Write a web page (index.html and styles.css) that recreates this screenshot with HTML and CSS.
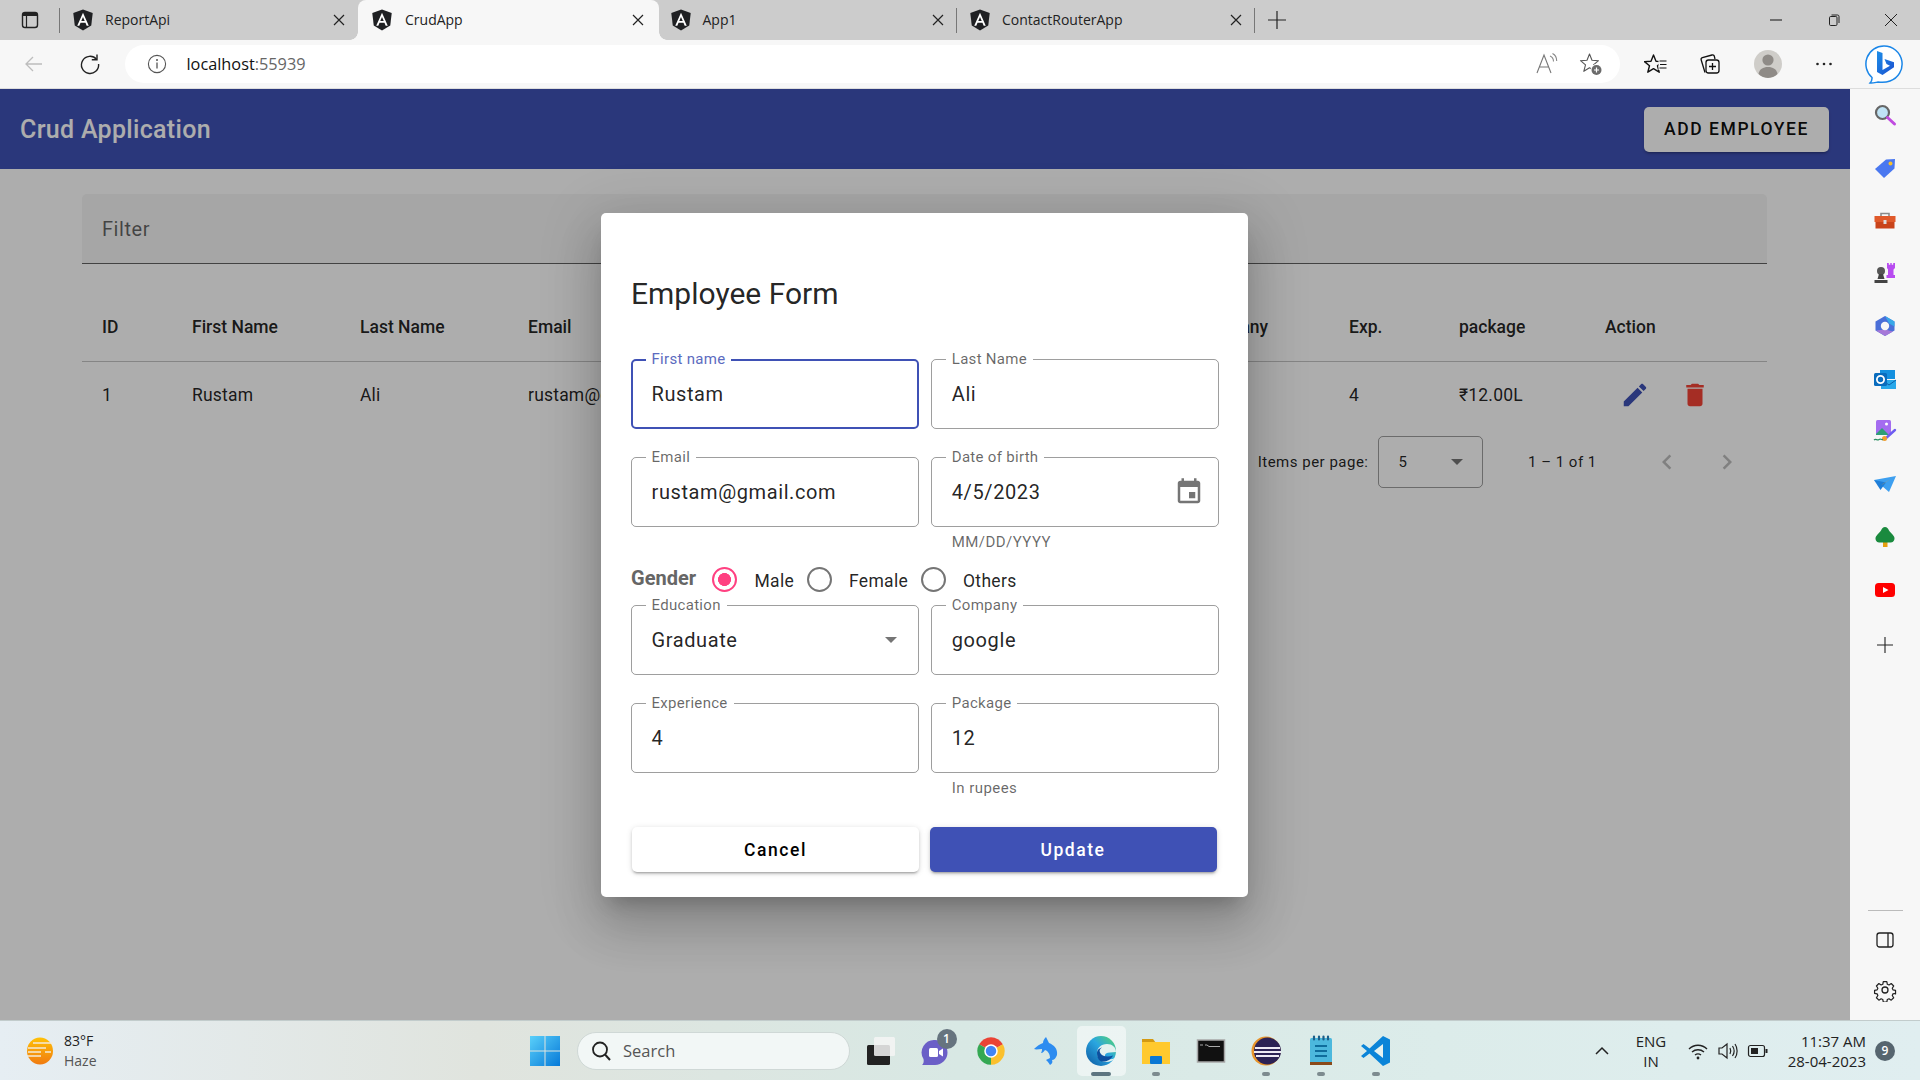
FILE: index.html
```html
<!DOCTYPE html>
<html lang="en">
<head>
<meta charset="utf-8">
<title>CrudApp</title>
<link rel="stylesheet" href="styles.css">
</head>
<body>
<svg class="defs" aria-hidden="true">
  <defs>
    <symbol id="ng" viewBox="0 0 24 24">
      <path fill="#1f2023" d="M12 .5 22.6 4.3 21 18 12 23.5 3 18 1.4 4.3z"/>
      <path fill="#fff" fill-rule="evenodd" d="M12 4 5.7 18.3H8l1.3-3.2h5.4l1.3 3.2h2.3zM10.1 13.2 12 8.6l1.9 4.6z"/>
    </symbol>
    <symbol id="x" viewBox="0 0 12 12"><path d="M1 1l10 10M11 1 1 11" fill="none" stroke="#222" stroke-width="1.2"/></symbol>
    <linearGradient id="edgeG" x1="0" y1="1" x2="1" y2="0"><stop offset="0" stop-color="#0b57a0"/><stop offset=".55" stop-color="#2aa6e0"/><stop offset="1" stop-color="#58d86a"/></linearGradient>
    <linearGradient id="bingG" x1="0" y1="0" x2="1" y2="1"><stop offset="0" stop-color="#1e8fe8"/><stop offset="1" stop-color="#1b4fd0"/></linearGradient>
    <linearGradient id="sunG" x1="0" y1="0" x2="0" y2="1"><stop offset="0" stop-color="#ffc107"/><stop offset="1" stop-color="#f07a10"/></linearGradient>
    <linearGradient id="winG" x1="0" y1="0" x2="1" y2="1"><stop offset="0" stop-color="#5ad0fa"/><stop offset="1" stop-color="#0679d8"/></linearGradient>
  </defs>
</svg>

<div class="tabstrip">
  <div class="tab-toggle">
    <svg class="i20" viewBox="0 0 20 20"><rect x="2.5" y="2.5" width="15" height="15" rx="2.5" fill="none" stroke="#222" stroke-width="1.4"/><path d="M3 3h14v3H3z" fill="#222"/><path d="M6.5 6v11" stroke="#222" stroke-width="1.2"/></svg>
  </div>
  <div class="tab">
    <svg class="tab-ico"><use href="#ng"/></svg><span class="tab-text">ReportApi</span><svg class="tab-x"><use href="#x"/></svg>
  </div>
  <div class="tab tab-active">
    <svg class="tab-ico"><use href="#ng"/></svg><span class="tab-text">CrudApp</span><svg class="tab-x"><use href="#x"/></svg>
  </div>
  <div class="tab sep tab-third">
    <svg class="tab-ico"><use href="#ng"/></svg><span class="tab-text">App1</span><svg class="tab-x"><use href="#x"/></svg>
  </div>
  <div class="tab sep">
    <svg class="tab-ico"><use href="#ng"/></svg><span class="tab-text">ContactRouterApp</span><svg class="tab-x"><use href="#x"/></svg>
  </div>
  <svg class="new-tab" viewBox="0 0 18 18"><path d="M9 0v18M0 9h18" stroke="#222" stroke-width="1.2"/></svg>
  <div class="win-controls">
    <div class="win-btn"><svg class="i12" viewBox="0 0 12 12"><path d="M0 6h12" stroke="#222" stroke-width="1.1"/></svg></div>
    <div class="win-btn"><svg class="i12" viewBox="0 0 12 12"><rect x="1.5" y="2.5" width="7.5" height="9" rx="1.2" fill="none" stroke="#222"/><path d="M3.5 1h6a1.5 1.5 0 0 1 1.5 1.5V9" fill="none" stroke="#222"/></svg></div>
    <div class="win-btn"><svg class="i12" viewBox="0 0 12 12"><path d="M0 0l12 12M12 0 0 12" stroke="#222" stroke-width="1"/></svg></div>
  </div>
</div>

<div class="toolbar">
  <div class="tool"><svg class="i20" viewBox="0 0 20 20"><path d="M18 10H2M9 3l-7 7 7 7" fill="none" stroke="#bdbdbd" stroke-width="1.3"/></svg></div>
  <div class="tool"><svg class="i22" viewBox="0 0 22 22"><path d="M17.5 6.2A8.6 8.6 0 1 0 19.6 11" fill="none" stroke="#222" stroke-width="1.4"/><path d="M18 1.5v5.2h-5.2" fill="none" stroke="#222" stroke-width="1.4"/></svg></div>
  <div class="address">
    <svg class="i20" viewBox="0 0 20 20"><circle cx="10" cy="10" r="8.6" fill="none" stroke="#555" stroke-width="1.1"/><path d="M10 8.6v6" stroke="#555" stroke-width="1.3"/><circle cx="10" cy="6" r="1" fill="#555"/></svg>
    <span class="url">localhost<span class="url-port">:55939</span></span>
    <div class="address-icons">
      <svg class="i24" viewBox="0 0 24 24"><path d="M2 21 9 3l7 18M4.6 15h8.800" fill="none" stroke="#777" stroke-width="1.1"/><path d="M15 4c2.500 1 3.500 3 3.500 5.500M17.500 1.500c3 1.500 4.200 4 4.200 7.500" fill="none" stroke="#888" stroke-width="1.1"/></svg>
      <svg class="i24" viewBox="0 0 24 24"><path d="M10.500 2 13 8.300l6.500.4-5 4.200 1.700 6.400-5.700-3.500-5.700 3.500 1.700-6.400-5-4.200 6.500-.4z" fill="none" stroke="#555" stroke-width="1.1" stroke-linejoin="round"/><circle cx="17.500" cy="18" r="6" fill="#fff"/><circle cx="17.500" cy="18" r="5" fill="#6b6b6b"/><path d="M17.500 15.500v5M15 18h5" stroke="#fff" stroke-width="1.2"/></svg>
    </div>
  </div>
  <div class="tool"><svg class="i24" viewBox="0 0 24 24"><path d="M9.500 3l2.500 6.200 6.500.4-5 4.200 1.700 6.400-5.700-3.500-5.700 3.500 1.700-6.400-5-4.200 6.500-.4z" fill="none" stroke="#111" stroke-width="1.400" stroke-linejoin="round"/><path d="M14.500 8h8.500v10h-8.500z" fill="#f7f7f7"/><path d="M15.500 9h7M16 12.500h6.500M15.500 16h7" stroke="#111" stroke-width="1.200"/></svg></div>
  <div class="tool tool-coll"><svg class="i24" viewBox="0 0 24 24"><path d="M7 20.500 3.200 8c-.3-1 .2-2 1.200-2.300L14 3c1-.3 2 .2 2.300 1.200L17 7" fill="none" stroke="#111" stroke-width="1.300"/><rect x="8" y="8" width="13" height="13" rx="2.500" fill="#f7f7f7" stroke="#111" stroke-width="1.300"/><path d="M14.500 11v7M11 14.500h7" stroke="#111" stroke-width="1.300"/></svg></div>
  <div class="tool"><div class="avatar"><svg class="i28" viewBox="0 0 28 28"><circle cx="14" cy="10" r="5.600" fill="#8f8b87"/><path d="M4.500 24c1-5 4.500-7 9.500-7s8.500 2 9.500 7c-2.500 2.500-6 4-9.500 4s-7-1.500-9.500-4z" fill="#8f8b87"/></svg></div></div>
  <div class="tool"><svg class="i20" viewBox="0 0 20 20"><circle cx="3.500" cy="10" r="1.300" fill="#222"/><circle cx="10" cy="10" r="1.300" fill="#222"/><circle cx="16.500" cy="10" r="1.300" fill="#222"/></svg></div>
  <div class="tool tool-bing"><svg class="i40" viewBox="0 0 40 40"><path d="M20 2a18 18 0 0 1 6 35c-4 1.500-9 1.500-12 1-3 .6-6 1.500-8 1 1.500-1.500 2.200-3.300 2-5.500A18 18 0 0 1 20 2z" fill="#fff" stroke="#1a86e8" stroke-width="1.500"/><path d="M13 7l5.500 2v17l7.500-4.300-3.500-1.700-2-5 9.500 3.300v5L18.500 31 13 28z" fill="url(#bingG)"/></svg></div>
</div>

<div class="main">
  <div class="page">
    <header class="appbar">
      <span class="app-title">Crud Application</span>
      <button class="add-btn">ADD EMPLOYEE</button>
    </header>
    <div class="content">
      <div class="filter"><span>Filter</span></div>
      <table class="table">
        <colgroup>
          <col class="c-id"><col class="c-first"><col class="c-last"><col class="c-email"><col class="c-hidden"><col class="c-comp"><col class="c-exp"><col class="c-pack"><col class="c-act">
        </colgroup>
        <thead>
          <tr><th>ID</th><th>First Name</th><th>Last Name</th><th>Email</th><th></th><th>Company</th><th>Exp.</th><th>package</th><th>Action</th></tr>
        </thead>
        <tbody>
          <tr>
            <td>1</td><td>Rustam</td><td>Ali</td><td>rustam@gmail.com</td><td></td><td>google</td><td>4</td><td>₹12.00L</td>
            <td>
              <div class="actions">
                <span class="icon-btn"><svg class="i30 ic-edit" viewBox="0 0 24 24"><path d="M3 17.250V21h3.750L17.810 9.940l-3.750-3.750L3 17.250zM20.710 7.040c.39-.39.39-1.020 0-1.410l-2.340-2.340c-.39-.39-1.020-.39-1.410 0l-1.830 1.830 3.750 3.750 1.830-1.830z"/></svg></span>
                <span class="icon-btn"><svg class="i30 ic-del" viewBox="0 0 24 24"><path d="M6 19c0 1.100.9 2 2 2h8c1.100 0 2-.9 2-2V7H6v12zM19 4h-3.500l-1-1h-5l-1 1H5v2h14V4z"/></svg></span>
              </div>
            </td>
          </tr>
        </tbody>
      </table>
      <div class="paginator">
        <span class="pg-label">Items per page:</span>
        <div class="pg-select"><span>5</span><i class="caret"></i></div>
        <span class="pg-range">1 – 1 of 1</span>
        <span class="pg-btn"><svg class="i30 ic-dis" viewBox="0 0 24 24"><path d="M15.410 7.410L14 6l-6 6 6 6 1.410-1.410L10.830 12z"/></svg></span>
        <span class="pg-btn"><svg class="i30 ic-dis" viewBox="0 0 24 24"><path d="M10 6L8.590 7.410 13.170 12l-4.580 4.580L10 18l6-6z"/></svg></span>
      </div>
    </div>

    <div class="backdrop">
      <div class="dialog">
        <h2 class="dialog-title">Employee Form</h2>
        <div class="form-grid">
          <div class="cell">
            <div class="field field-focus"><label class="f-label">First name</label><span class="f-value">Rustam</span></div>
          </div>
          <div class="cell">
            <div class="field"><label class="f-label">Last Name</label><span class="f-value">Ali</span></div>
          </div>
          <div class="cell">
            <div class="field"><label class="f-label">Email</label><span class="f-value">rustam@gmail.com</span></div>
          </div>
          <div class="cell">
            <div class="field"><label class="f-label">Date of birth</label><span class="f-value">4/5/2023</span>
              <svg class="i30 ic-cal" viewBox="0 0 24 24"><path d="M17 12h-5v5h5v-5zM16 1v2H8V1H6v2H5c-1.110 0-1.990.9-1.990 2L3 19c0 1.100.89 2 2 2h14c1.100 0 2-.9 2-2V5c0-1.100-.9-2-2-2h-1V1h-2zm3 18H5V8h14v11z"/></svg>
            </div>
            <div class="hint">MM/DD/YYYY</div>
          </div>
        </div>
        <div class="gender">
          <span class="gender-label">Gender</span>
          <span class="radio-box"><i class="radio radio-on"></i></span><span class="radio-text">Male</span>
          <span class="radio-box radio-next"><i class="radio"></i></span><span class="radio-text">Female</span>
          <span class="radio-box radio-next"><i class="radio"></i></span><span class="radio-text">Others</span>
        </div>
        <div class="form-grid">
          <div class="cell">
            <div class="field"><label class="f-label">Education</label><span class="f-value">Graduate</span><i class="caret caret-lg"></i></div>
          </div>
          <div class="cell">
            <div class="field"><label class="f-label">Company</label><span class="f-value">google</span></div>
          </div>
          <div class="cell">
            <div class="field"><label class="f-label">Experience</label><span class="f-value">4</span></div>
          </div>
          <div class="cell">
            <div class="field"><label class="f-label">Package</label><span class="f-value">12</span></div>
            <div class="hint">In rupees</div>
          </div>
        </div>
        <div class="dialog-actions">
          <button class="btn btn-cancel">Cancel</button>
          <button class="btn btn-update">Update</button>
        </div>
      </div>
    </div>
  </div>

  <aside class="sidebar">
    <div class="side-item"><svg class="i24" viewBox="0 0 24 24"><circle cx="9.500" cy="9.500" r="6.500" fill="#bfe3f5" stroke="#666" stroke-width="2.200"/><path d="M14.500 14.500l7 6.500" stroke="#c04be0" stroke-width="3" stroke-linecap="round"/></svg></div>
    <div class="side-item"><svg class="i24" viewBox="0 0 24 24"><path d="M2 13 13 3.500 22 3l-.5 9.500L11 22z" fill="#4a78f0"/><circle cx="17.500" cy="7.500" r="2" fill="#f6c02c"/></svg></div>
    <div class="side-item"><svg class="i24" viewBox="0 0 24 24"><path d="M8 7V4.500h8V7" fill="none" stroke="#8a8a8a" stroke-width="1.600"/><rect x="1.500" y="7" width="21" height="6" fill="#e0592a"/><rect x="2.500" y="13" width="19" height="6.500" fill="#c9431a"/><rect x="10.500" y="11" width="3" height="4" fill="#ddd"/></svg></div>
    <div class="side-item"><svg class="i24" viewBox="0 0 24 24"><circle cx="8" cy="10" r="4" fill="#555"/><path d="M6 13h4l1.500 5h-7zM1.500 19h13v3h-13z" fill="#444"/><path d="M14 2h1.800v1.800h1.500V2h1.400v1.800h1.500V2H22v5l-1.500 1.500V14H22v3h-8.500v-3H15V8.500L14 7z" fill="#b84cf0"/></svg></div>
    <div class="side-item"><svg class="i24" viewBox="0 0 24 24"><path d="M12 2l9.500 5.500v9L12 22l-9.500-5.500v-9z" fill="#4a6fd8"/><path d="M12 2l9.500 5.500v5L16 9.500z" fill="#38a8e8"/><path d="M3 16.500 12 22l8-4.500-8-2z" fill="#a678d8"/><circle cx="12" cy="12" r="4.200" fill="#f7f7f7"/></svg></div>
    <div class="side-item"><svg class="i24" viewBox="0 0 24 24"><path d="M7 3h15v9H7z" fill="#1490df"/><path d="M8 13h15v9H8z" fill="#28a8ea"/><path d="M9 13l7 5 7-5" fill="none" stroke="#0a5fa8" stroke-width="1"/><rect x="1" y="6" width="13" height="13" rx="1.500" fill="#0a6cbd"/><circle cx="7.500" cy="12.500" r="3.600" fill="none" stroke="#fff" stroke-width="1.800"/></svg></div>
    <div class="side-item"><svg class="i24" viewBox="0 0 24 24"><rect x="3" y="1" width="15" height="15" rx="1.500" fill="#a46cf0"/><path d="M3 15l6-6 7 7H3z" fill="#2e9e78"/><circle cx="13.500" cy="5" r="1.500" fill="#fff"/><path d="M12 20l10-9" stroke="#6d5cf0" stroke-width="2.400" stroke-linecap="round"/><circle cx="11.500" cy="19.500" r="2.500" fill="#f0a030"/><path d="M1 21c2-2 3 1 5-.5s2 1 4 0" fill="none" stroke="#2a9060" stroke-width="1.200"/></svg></div>
    <div class="side-item"><svg class="i24" viewBox="0 0 24 24"><path d="M1 8l22-4-7 16-7-6z" fill="#3d9ff0"/><path d="M1 8l12 2.500L7.500 18z" fill="#1f7ed8"/><path d="M8 13l12-7.500L10 12z" fill="#f4a824"/></svg></div>
    <div class="side-item"><svg class="i24" viewBox="0 0 24 24"><rect x="10" y="17" width="4.500" height="5" fill="#e6a010"/><path d="M12 2c2 0 3 1.500 4 3.500 1 1.800 3 3 5 6 1.500 2.500-.5 6-3 6H6c-2.500 0-4.500-3.500-3-6 2-3 4-4.200 5-6C9 3.500 10 2 12 2z" fill="#1a8a3e"/></svg></div>
    <div class="side-item"><svg class="i24" viewBox="0 0 24 24"><rect x="2" y="5" width="20" height="14" rx="3.500" fill="#f00"/><path d="M10 9l5.500 3-5.500 3z" fill="#fff"/></svg></div>
    <div class="side-item side-plus"><svg class="i16" viewBox="0 0 16 16"><path d="M8 0v16M0 8h16" stroke="#222" stroke-width="1.100"/></svg></div>
    <div class="side-bottom">
      <div class="side-line"></div>
      <svg class="i20" viewBox="0 0 20 20"><rect x="2" y="3" width="16" height="14" rx="2.500" fill="none" stroke="#222" stroke-width="1.300"/><path d="M13 3v14" stroke="#222" stroke-width="1.300"/></svg>
      <svg class="i24" viewBox="0 0 24 24"><path d="M10 2.500h4l.6 2.900 1.900.8 2.500-1.600 2.800 2.800-1.600 2.500.8 1.900 2.900.6v4-.7 0l-2.900.6-.8 1.900 1.600 2.500-2.800 2.800-2.500-1.600-1.900.8-.6 2.900h-4l-.6-2.900-1.900-.8-2.500 1.600-2.800-2.800 1.600-2.500-.8-1.900-2.900-.6v-3.300l2.900-.6.8-1.900-1.600-2.500L5 4.600l2.500 1.600 1.900-.8z" transform="translate(1.500 1.500) scale(.88)" fill="none" stroke="#222" stroke-width="1.400" stroke-linejoin="round"/><circle cx="12" cy="12" r="3" fill="none" stroke="#222" stroke-width="1.300"/></svg>
    </div>
  </aside>
</div>

<footer class="taskbar">
  <div class="weather">
    <svg class="sun" viewBox="0 0 30 28"><ellipse cx="15" cy="14" rx="13" ry="13.500" fill="url(#sunG)"/><path d="M8 6h20M3 11h18M2 19h14M3 15h13M20 15h6" stroke="#f3ead8" stroke-width="1.700"/></svg>
    <div class="weather-text"><span class="w-temp">83°F</span><span class="w-desc">Haze</span></div>
  </div>
  <div class="tb-win"><svg class="i30" viewBox="0 0 30 30"><path d="M0 0h14.500v14.500H0zM15.500 0H30v14.500H15.500zM0 15.500h14.500V30H0zM15.500 15.500H30V30H15.500z" fill="url(#winG)"/></svg></div>
  <div class="tb-search">
    <svg class="i22" viewBox="0 0 22 22"><circle cx="10" cy="9.500" r="7" fill="none" stroke="#222" stroke-width="1.800"/><path d="M15 14.500l5 5.500" stroke="#222" stroke-width="2"/></svg>
    <span>Search</span>
  </div>
  <div class="tb-cell"><svg class="i30" viewBox="0 0 30 30"><rect x="1" y="9" width="23" height="20" rx="1.500" fill="#222"/><rect x="8" y="1" width="21" height="19" rx="1.500" fill="#f4f4f4" fill-opacity=".85"/></svg></div>
  <div class="tb-cell"><svg class="i30" viewBox="0 0 30 30"><path d="M14 4a12.500 12.500 0 0 1 0 25H1c1.500-1.500 2-3 1.500-6A12.500 12.500 0 0 1 14 4z" fill="#6b5fc7"/><rect x="8" y="12" width="9" height="9" rx="1.500" fill="#fff"/><path d="M18 15l4-2.500v8L18 18z" fill="#fff"/></svg><b class="chat-badge">1</b></div>
  <div class="tb-cell"><svg class="i30" viewBox="0 0 24 24"><path d="M12 12 21.500 6.500A11 11 0 0 0 2.500 6.500z" fill="#ea4335"/><path d="M12 12 2.500 6.500A11 11 0 0 0 12 23z" fill="#34a853"/><path d="M12 12 12 23A11 11 0 0 0 21.500 6.500z" fill="#fbc02d"/><circle cx="12" cy="12" r="5.400" fill="#fff"/><circle cx="12" cy="12" r="4.200" fill="#4285f4"/></svg></div>
  <div class="tb-cell"><svg class="i30" viewBox="0 0 30 30"><path d="M3 13C6 10 9 8 12 7 12 5 13 3 15 1 16 3 17 5 18 7 23 9 27 13 26 19 25 22 23 24 21 24 22 26 21 28 19 29 18 27 17 26 15 24 16 23 18 23 19 22 19 18 17 15 14 14 13 15 12 17 10 17 11 15 11 14 11 13 8 13 5 14 3 13Z" fill="#2d8cf0"/></svg></div>
  <div class="tb-cell tb-active"><svg class="i32" viewBox="0 0 32 32"><circle cx="16" cy="16" r="15" fill="url(#edgeG)"/><path d="M31 17c0-5-4-8-9-8-6 0-10 4-10 9 0 5 4 9 9 9 4 0 7-1.500 9-4-3 1.500-6 1.500-8 .5-2-1-3-3-1-5 2-1.500 6-1 10-1.500z" fill="#e3f2ef"/><path d="M12 18c0-3 2.500-5 5-5.500-2 1-3 3-2 5 1.500 3.500 7 5.500 13 3-2 4-6 6.500-11 6-3.500-.5-5-4.500-5-8.500z" fill="#0c4f9e"/></svg></div>
  <div class="tb-cell tb-run"><svg class="i32" viewBox="0 0 32 32"><path d="M2 4h11l3 4H2z" fill="#d49a12"/><rect x="2" y="7" width="28" height="22" fill="#ffc92e"/><rect x="10" y="21" width="12" height="8" rx="1" fill="#0a78d4"/></svg></div>
  <div class="tb-cell"><svg class="i30" viewBox="0 0 30 24"><rect x="1.500" y="1" width="27" height="22" fill="#111" stroke="#a8a8a8" stroke-width="1.500"/><path d="M4 6h3M9 6h2l2 1.500h11" stroke="#aaa" stroke-width="1"/></svg></div>
  <div class="tb-cell tb-run"><svg class="i30" viewBox="0 0 30 30"><circle cx="15" cy="15" r="14.500" fill="#e8942a"/><circle cx="16.500" cy="15" r="13.500" fill="#2c2255"/><path d="M4 12h25M3 16h27M5 20h23" stroke="#eeeaf5" stroke-width="2"/></svg></div>
  <div class="tb-cell tb-run"><svg class="i32" viewBox="0 0 32 32"><rect x="5" y="3" width="22" height="25" rx="1.500" fill="#4cb8dd"/><rect x="5" y="27" width="22" height="3" fill="#8a4a1a"/><path d="M9 1.500v3M14 1.500v3M18.500 1.500v3M23 1.500v3" stroke="#1a5f8a" stroke-width="2.200" stroke-linecap="round"/><path d="M10 11h12M10 16h12M10 21h12" stroke="#0f6d9c" stroke-width="2.200"/></svg></div>
  <div class="tb-cell tb-run"><svg class="i32" viewBox="0 0 32 32"><path d="M23 1l7 3.500v23L23 31 9.500 18.500 3.500 23 1 21l6-5-6-5 2.500-2 6 4.500z" fill="#0a84d8"/><path d="M23 9v14l-9-7z" fill="#e5f2f0"/></svg></div>
  <div class="tray">
    <svg class="i16" viewBox="0 0 16 16"><path d="M2 11l6-6 6 6" fill="none" stroke="#222" stroke-width="1.500"/></svg>
    <div class="lang"><span>ENG</span><span>IN</span></div>
    <div class="tray-icons">
      <svg class="i22" viewBox="0 0 22 22"><path d="M2 9c5-5 13-5 18 0M5 12c3.500-3 8.500-3 12 0M8 15c2-1.500 4-1.500 6 0" fill="none" stroke="#222" stroke-width="1.400"/><circle cx="11" cy="18" r="1.400" fill="#222"/></svg>
      <svg class="i22" viewBox="0 0 22 22"><path d="M2 8h3l5-4v14l-5-4H2z" fill="none" stroke="#222" stroke-width="1.200"/><path d="M13 8c1 2 1 4 0 6M15.500 6c2 3 2 7 0 10M18 4c2.800 4 2.800 10 0 14" fill="none" stroke="#222" stroke-width="1.200"/></svg>
      <svg class="i22" viewBox="0 0 22 22"><rect x="1.500" y="5.500" width="16" height="11" rx="2" fill="none" stroke="#222" stroke-width="1.200"/><rect x="4" y="8" width="7" height="6" fill="#222"/><rect x="18.500" y="9" width="2" height="4" fill="#222"/></svg>
    </div>
    <div class="clock"><span>11:37 AM</span><span>28-04-2023</span></div>
    <b class="notif">9</b>
  </div>
</footer>
</body>
</html>
```

FILE: styles.css
```css
* { box-sizing: border-box; }
html, body { margin: 0; padding: 0; }
body {
  width: 1920px;
  height: 1080px;
  overflow: hidden;
  display: flex;
  flex-direction: column;
  font-family: Roboto, "Liberation Sans", sans-serif;
  background: #fff;
  color: rgba(0,0,0,.87);
}
.defs { position: absolute; width: 0; height: 0; }
svg { display: block; flex: none; }
.i12 { width: 12px; height: 12px; }
.i16 { width: 16px; height: 16px; }
.i20 { width: 20px; height: 20px; }
.i22 { width: 22px; height: 22px; }
.i24 { width: 24px; height: 24px; }
.i28 { width: 28px; height: 28px; }
.i30 { width: 30px; height: 30px; }
.i32 { width: 32px; height: 32px; }
.i40 { width: 40px; height: 40px; }

/* Browser tab strip */
.tabstrip {
  height: 40px;
  flex: none;
  display: flex;
  align-items: center;
  background: #ccc;
  font-family: "Open Sans", sans-serif;
}
.tab-toggle {
  width: 60px;
  height: 40px;
  display: flex;
  align-items: center;
  justify-content: center;
  padding-right: 1px;
  position: relative;
}
.tab-toggle::after, .sep::after {
  content: "";
  position: absolute;
  right: 0;
  top: 8px;
  width: 1px;
  height: 25px;
  background: #777;
}
.tab {
  position: relative;
  width: 298px;
  height: 40px;
  display: flex;
  align-items: center;
  padding: 0 13px 0 12px;
  font-size: 14px;
  color: #222;
}
.tab-third { padding-left: 10.5px; }
.tab-active {
  width: 301px;
  padding: 0 15px 0 12.5px;
  background: #f7f7f7;
  border-radius: 8px 8px 0 0;
}
.tab-active::before, .tab-active::after {
  content: "";
  position: absolute;
  bottom: 0;
  width: 8px;
  height: 8px;
}
.tab-active::before {
  left: -8px;
  background: radial-gradient(circle at 0 0, transparent 7.5px, #f7f7f7 8px);
}
.tab-active::after {
  right: -8px;
  background: radial-gradient(circle at 100% 0, transparent 7.5px, #f7f7f7 8px);
}
.tab-ico { width: 22px; height: 22px; margin-right: 11px; }
.tab-active .tab-ico { margin-right: 12.5px; }
.tab-text { flex: 1; margin-bottom: 2px; }
.tab-x { width: 12px; height: 12px; }
.new-tab { width: 18px; height: 18px; margin-left: 13px; }
.win-controls { margin-left: auto; display: flex; }
.win-btn {
  width: 57.5px;
  height: 40px;
  display: flex;
  align-items: center;
  justify-content: center;
}

/* Browser toolbar */
.toolbar {
  height: 49px;
  flex: none;
  display: flex;
  align-items: center;
  padding: 0 4px 1px 6px;
  background: #f7f7f7;
  border-bottom: 1px solid #ddd;
}
.tool {
  width: 56px;
  height: 40px;
  flex: none;
  display: flex;
  align-items: center;
  justify-content: center;
}
.tool-coll { padding-right: 4px; }
.tool-bing { width: 64px; }
.address {
  flex: 1;
  height: 38px;
  margin: 0 8px 0 7px;
  padding: 0 17px 0 21.5px;
  background: #fff;
  border-radius: 19px;
  display: flex;
  align-items: center;
  font-family: "Open Sans", sans-serif;
}
.url { margin-left: 20px; font-size: 16.3px; color: #111; }
.url-port { color: #666; }
.address-icons { margin-left: auto; display: flex; gap: 20px; }
.avatar {
  width: 28px;
  height: 28px;
  border-radius: 50%;
  background: #cfcdc9;
  overflow: hidden;
}

/* Main area */
.main { flex: 1; min-height: 0; display: flex; }
.page { flex: 1; min-width: 0; position: relative; background: #fff; }
.appbar {
  height: 80px;
  display: flex;
  align-items: center;
  justify-content: space-between;
  padding: 0 21px 0 20px;
  background: #3f51b5;
  color: #fff;
}
.app-title { font-size: 25px; font-weight: 500; letter-spacing: .31px; }
.add-btn {
  height: 45px;
  width: 185px;
  padding: 0;
  border: 0;
  border-radius: 5px;
  background: #fff;
  color: rgba(0,0,0,.95);
  font: 500 17.5px Roboto, sans-serif;
  letter-spacing: 1.55px;
  box-shadow: 0 3px 2px -2px rgba(0,0,0,.2), 0 2px 3px rgba(0,0,0,.14);
}
.content { padding: 25px 83px 0 82px; }
.filter {
  height: 70px;
  padding-left: 20px;
  display: flex;
  align-items: center;
  background: #f5f5f5;
  border-bottom: 1px solid rgba(0,0,0,.6);
  border-radius: 5px 5px 0 0;
  font-size: 20px;
  letter-spacing: .55px;
  color: rgba(0,0,0,.6);
}
.table {
  width: 1685px;
  margin-top: 32px;
  table-layout: fixed;
  border-collapse: collapse;
}
.c-id { width: 90px; }
.c-first { width: 168px; }
.c-last { width: 168px; }
.c-email { width: 240px; }
.c-hidden { width: 426px; }
.c-comp { width: 155px; }
.c-exp { width: 110px; }
.c-pack { width: 146px; }
.c-act { width: 182px; }
.table th, .table td {
  height: 65px;
  padding: 0 0 0 20px;
  text-align: left;
  font-size: 17.5px;
  white-space: nowrap;
}
.table th { font-weight: 500; padding-bottom: 2px; border-bottom: 1px solid rgba(0,0,0,.12); }
.table td { font-weight: 400; padding-top: 2px; letter-spacing: .2px; }
.actions { display: flex; gap: 10.5px; margin-left: 4.5px; }
.icon-btn {
  width: 50px;
  height: 50px;
  display: flex;
  align-items: center;
  justify-content: center;
}
.ic-edit { fill: #3f51b5; }
.ic-del { fill: #f44336; }
.ic-dis { fill: rgba(0,0,0,.26); }
.ic-cal { fill: #757575; margin-right: -5.5px; margin-left: auto; }
.paginator {
  height: 72px;
  display: flex;
  align-items: center;
  justify-content: flex-end;
  padding-right: 15px;
  font-size: 15px;
  letter-spacing: .5px;
}
.pg-select {
  width: 105.5px;
  height: 52px;
  margin-left: 9px;
  padding: 0 19px 0 20px;
  display: flex;
  align-items: center;
  justify-content: space-between;
  border: 1px solid rgba(0,0,0,.38);
  border-radius: 5px;
}
.pg-range { margin-left: 45px; width: 68px; white-space: nowrap; }
.pg-btn {
  width: 50px;
  height: 50px;
  margin-left: 10px;
  display: flex;
  align-items: center;
  justify-content: center;
}
.pg-range + .pg-btn { margin-left: 46px; }
.caret {
  width: 0;
  height: 0;
  border-left: 6.5px solid transparent;
  border-right: 6.5px solid transparent;
  border-top: 6.5px solid rgba(0,0,0,.54);
}

/* Dialog */
.backdrop {
  position: absolute;
  inset: 0;
  padding-right: 1px;
  background: rgba(0,0,0,.32);
  display: flex;
  align-items: center;
  justify-content: center;
}
.dialog {
  width: 647px;
  padding: 60.75px 29px 24.25px 30px;
  background: #fff;
  border-radius: 5px;
  box-shadow: 0 14px 18px -9px rgba(0,0,0,.2), 0 30px 47px 3px rgba(0,0,0,.14), 0 11px 57px 10px rgba(0,0,0,.12);
}
.dialog-title {
  margin: 1px 0 45px;
  font-size: 30px;
  line-height: 40px;
  font-weight: 400;
}
.form-grid {
  display: grid;
  grid-template-columns: 1fr 1fr;
  column-gap: 12.5px;
}
.cell { height: 97.5px; }
.field {
  position: relative;
  height: 70px;
  padding: 0 19.5px;
  display: flex;
  align-items: center;
  border: 1px solid rgba(0,0,0,.38);
  border-radius: 5px;
}
.field-focus { border: 2px solid #3f51b5; padding: 0 18.5px; }
.f-label {
  position: absolute;
  left: 13.5px;
  top: -10px;
  padding: 0 6px;
  background: #fff;
  font-size: 15px;
  line-height: 18px;
  letter-spacing: .3px;
  color: rgba(0,0,0,.6);
}
.field-focus .f-label { left: 12.5px; top: -11px; color: #5c6bc0; }
.f-value { font-size: 20px; letter-spacing: .6px; }
.caret-lg { margin-left: auto; margin-right: 1px; }
.hint {
  padding: 6.5px 0 0 20.5px;
  font-size: 15px;
  line-height: 18px;
  letter-spacing: .45px;
  color: rgba(0,0,0,.6);
}
.gender {
  height: 51px;
  display: flex;
  align-items: center;
  font-size: 17.5px;
  letter-spacing: .3px;
}
.gender-label {
  width: 68.5px;
  margin-bottom: 4px;
  font-size: 20px;
  font-weight: 700;
  letter-spacing: 0;
  color: #666;
}
.radio-box {
  width: 50px;
  height: 50px;
  display: flex;
  align-items: center;
  justify-content: center;
}
.radio-next { padding-left: 1px; }
.radio-text { padding-left: 5px; margin-top: 2px; }
.radio {
  width: 25px;
  height: 25px;
  border: 2.5px solid rgba(0,0,0,.54);
  border-radius: 50%;
  display: block;
}
.radio-on {
  border-color: #ff4081;
  background: radial-gradient(circle, #ff4081 0 6.25px, transparent 6.75px);
}
.dialog-actions { display: flex; gap: 10.5px; margin-top: 27px; padding-left: 1px; }
.btn {
  width: 287px;
  height: 45px;
  padding: 0;
  border: 0;
  border-radius: 5px;
  font: 500 17.5px Roboto, sans-serif;
  letter-spacing: 1.55px;
  box-shadow: 0 3px 2px -2px rgba(0,0,0,.2), 0 2px 3px rgba(0,0,0,.14), 0 1px 6px rgba(0,0,0,.12);
}
.btn-cancel { background: #fff; color: #000; }
.btn-update { background: #3f51b5; color: #fff; }

/* Edge sidebar */
.sidebar {
  width: 70px;
  flex: none;
  display: flex;
  flex-direction: column;
  align-items: center;
  background: #f7f7f7;
}
.side-item {
  height: 52.7px;
  flex: none;
  display: flex;
  align-items: center;
  justify-content: center;
}
.side-plus { margin-top: 3px; }
.side-bottom {
  margin-top: auto;
  padding-bottom: 18px;
  display: flex;
  flex-direction: column;
  align-items: center;
  gap: 28px;
}
.side-line { width: 35px; height: 1px; margin-bottom: -9px; background: #bbb; }

/* Windows taskbar */
.taskbar {
  height: 60px;
  flex: none;
  display: flex;
  align-items: center;
  border-top: 1px solid #c2cccc;
  background: linear-gradient(90deg, #e6eef3 0%, #e0e4de 25%, #d8e8e4 50%, #dcecea 75%, #e0eef0 100%);
  font-family: "Open Sans", sans-serif;
  color: #222;
}
.weather { width: 517px; padding-left: 25px; display: flex; align-items: center; gap: 9px; }
.sun { width: 30px; height: 28px; }
.weather-text { display: flex; flex-direction: column; font-size: 14px; line-height: 20px; }
.w-desc { color: #555; }
.tb-win { width: 55px; display: flex; justify-content: center; }
.tb-search {
  width: 273px;
  height: 38px;
  margin: 0 3.5px 0 5px;
  padding-left: 12px;
  display: flex;
  align-items: center;
  gap: 11px;
  background: #f2f7f6;
  border: 1px solid #cfd8d6;
  border-radius: 19px;
  font-size: 16.5px;
  color: #555;
}
.tb-cell {
  position: relative;
  width: 55px;
  height: 50px;
  flex: none;
  display: flex;
  align-items: center;
  justify-content: center;
}
.tb-run::after, .tb-active::after {
  content: "";
  position: absolute;
  left: 50%;
  bottom: 0;
  width: 8px;
  height: 4px;
  margin-left: -4px;
  border-radius: 2px;
  background: #7d8b8f;
}
.tb-active::after { width: 20px; margin-left: -10px; background: #5d7580; }
.tb-active::before {
  content: "";
  position: absolute;
  inset: 0 3px;
  border-radius: 5px;
  background: rgba(255,255,255,.5);
}
.tb-active svg { position: relative; }
.chat-badge {
  position: absolute;
  top: 3px;
  right: 7px;
  width: 20px;
  height: 20px;
  border-radius: 50%;
  background: #66747f;
  color: #fff;
  font-size: 12px;
  font-weight: 600;
  line-height: 20px;
  text-align: center;
}
.tray { margin-left: auto; padding-right: 25px; display: flex; align-items: center; }
.lang, .clock { display: flex; flex-direction: column; font-size: 15px; line-height: 20px; }
.lang { align-items: center; width: 34px; margin-left: 24px; }
.tray-icons { display: flex; gap: 8px; margin-left: 19px; }
.clock { align-items: flex-end; width: 97px; }
.notif {
  width: 20px;
  height: 20px;
  margin-left: 9px;
  border-radius: 50%;
  background: #56656f;
  color: #fff;
  font-size: 12px;
  font-weight: 600;
  line-height: 20px;
  text-align: center;
}
```
